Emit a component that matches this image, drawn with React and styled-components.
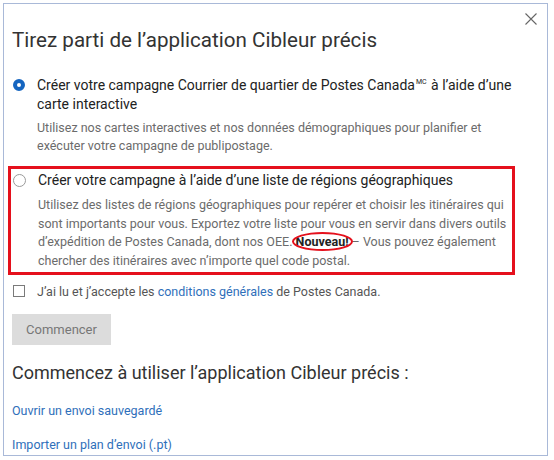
import React, { useState } from "react";
import styled, { createGlobalStyle } from "styled-components";

const GlobalStyle = createGlobalStyle`
  html, body {
    margin: 0;
    padding: 0;
    background: #ffffff;
  }
  body {
    font-family: Roboto, "Liberation Sans", Arial, sans-serif;
  }
`;

const Dialog = styled.div`
  position: relative;
  box-sizing: border-box;
  width: 545px;
  height: 453px;
  margin: 3px 0 0 3px;
  padding: 0 0 0 8px;
  border: 1px solid #a9b9d8;
  background: #fff;
  color: #333;
  overflow: hidden;
`;

const Close = styled.button`
  position: absolute;
  top: 5px;
  right: 6px;
  width: 20px;
  height: 20px;
  padding: 0;
  border: none;
  background: none;
  display: flex;
  align-items: center;
  justify-content: center;
  cursor: pointer;
`;

const Title = styled.h1`
  margin: 24px 0 0 0;
  font-size: 20.6px;
  line-height: 24px;
  font-weight: 400;
  color: #333;
`;

const Option = styled.div`
  display: grid;
  grid-template-columns: 25px 1fr;
  margin-top: ${(p) => p.$top || 0}px;
`;

const Highlight = styled.div`
  box-sizing: border-box;
  width: 507px;
  margin: 10px 0 0 -4px;
  padding: 2.5px 0 2px 2px;
  border: 3px solid #e5101c;
`;

const RadioDot = styled.span`
  box-sizing: border-box;
  width: ${(p) => (p.$checked ? 12 : 13)}px;
  height: ${(p) => (p.$checked ? 12 : 13)}px;
  margin: 3px 0 0 ${(p) => (p.$checked ? 1 : 0)}px;
  border-radius: 50%;
  border: ${(p) => (p.$checked ? "4px solid #1565c0" : "1px solid #9a9a9a")};
  background: #fff;
`;

const Label = styled.div`
  font-size: 14px;
  line-height: 19px;
  color: #222;
  white-space: nowrap;
  sup {
    font-size: 7px;
    vertical-align: 6px;
    line-height: 0;
    margin-left: 1px;
    margin-right: 1px;
  }
`;

const Desc = styled.p`
  grid-column: 2;
  margin: ${(p) => p.$top || 5}px 0 0 0;
  font-size: 12.5px;
  line-height: 18.5px;
  color: #6b6b6b;
  white-space: nowrap;
`;

const New = styled.strong`
  position: relative;
  font-weight: 700;
  color: #222;
  &::after {
    content: "";
    position: absolute;
    left: -4px;
    right: -4px;
    top: -2px;
    bottom: -2px;
    border: 2.5px solid #e5101c;
    border-radius: 50%;
  }
`;

const Terms = styled.label`
  display: grid;
  grid-template-columns: 25px 1fr;
  margin-top: 6.5px;
  font-size: 12.5px;
  line-height: 19px;
  color: #555;
  cursor: pointer;
`;

const Box = styled.span`
  box-sizing: border-box;
  width: 12px;
  height: 12px;
  margin: 3.5px 0 0 1px;
  border: 1px solid #7a7a7a;
  background: ${(p) => (p.$on ? "#1565c0" : "#fff")};
`;

const Link = styled.a`
  color: #2f6fba;
  text-decoration: none;
`;

const Button = styled.button`
  display: block;
  width: 99px;
  height: 31px;
  margin-top: 13.5px;
  padding: 0;
  border: none;
  background: #dcdcdc;
  color: #777;
  font-family: inherit;
  font-size: 13px;
`;

const SubTitle = styled.h2`
  margin: 17px 0 0 0;
  font-size: 18px;
  line-height: 22px;
  font-weight: 400;
  color: #333;
`;

const NavLink = styled.a`
  display: block;
  margin-top: ${(p) => p.$top}px;
  font-size: 12.5px;
  line-height: 18px;
  color: #2f6fba;
  text-decoration: none;
`;

export default function App() {
  const [agree, setAgree] = useState(false);

  return (
    <>
      <GlobalStyle />
      <Dialog>
        <Close aria-label="Fermer">
          <svg width="12" height="12" viewBox="0 0 12 12">
            <path d="M0.5 0.5 L11.5 11.5 M11.5 0.5 L0.5 11.5" stroke="#666" strokeWidth="1.1" />
          </svg>
        </Close>

        <Title>Tirez parti de l’application Cibleur précis</Title>

        <Option $top={23.5}>
          <RadioDot $checked />
          <Label>
            Créer votre campagne Courrier de quartier de Postes Canada<sup>MC</sup> à l’aide d’une
            <br />
            carte interactive
          </Label>
          <Desc>
            Utilisez nos cartes interactives et nos données démographiques pour planifier et
            <br />
            exécuter votre campagne de publipostage.
          </Desc>
        </Option>

        <Highlight>
          <Option>
            <RadioDot />
            <Label>Créer votre campagne à l’aide d’une liste de régions géographiques</Label>
            <Desc $top={6}>
              Utilisez des listes de régions géographiques pour repérer et choisir les itinéraires qui
              <br />
              sont importants pour vous. Exportez votre liste pour vous en servir dans divers outils
              <br />
              d’expédition de Postes Canada, dont nos OEE. <New>Nouveau!</New> – Vous pouvez également
              <br />
              chercher des itinéraires avec n’importe quel code postal.
            </Desc>
          </Option>
        </Highlight>

        <Terms onClick={() => setAgree(!agree)}>
          <Box $on={agree} />
          <span>
            J’ai lu et j’accepte les <Link href="#">conditions générales</Link> de Postes Canada.
          </span>
        </Terms>

        <Button disabled={!agree}>Commencer</Button>

        <SubTitle>Commencez à utiliser l’application Cibleur précis :</SubTitle>

        <NavLink href="#" $top={18}>Ouvrir un envoi sauvegardé</NavLink>
        <NavLink href="#" $top={16}>Importer un plan d’envoi (.pt)</NavLink>
      </Dialog>
    </>
  );
}
